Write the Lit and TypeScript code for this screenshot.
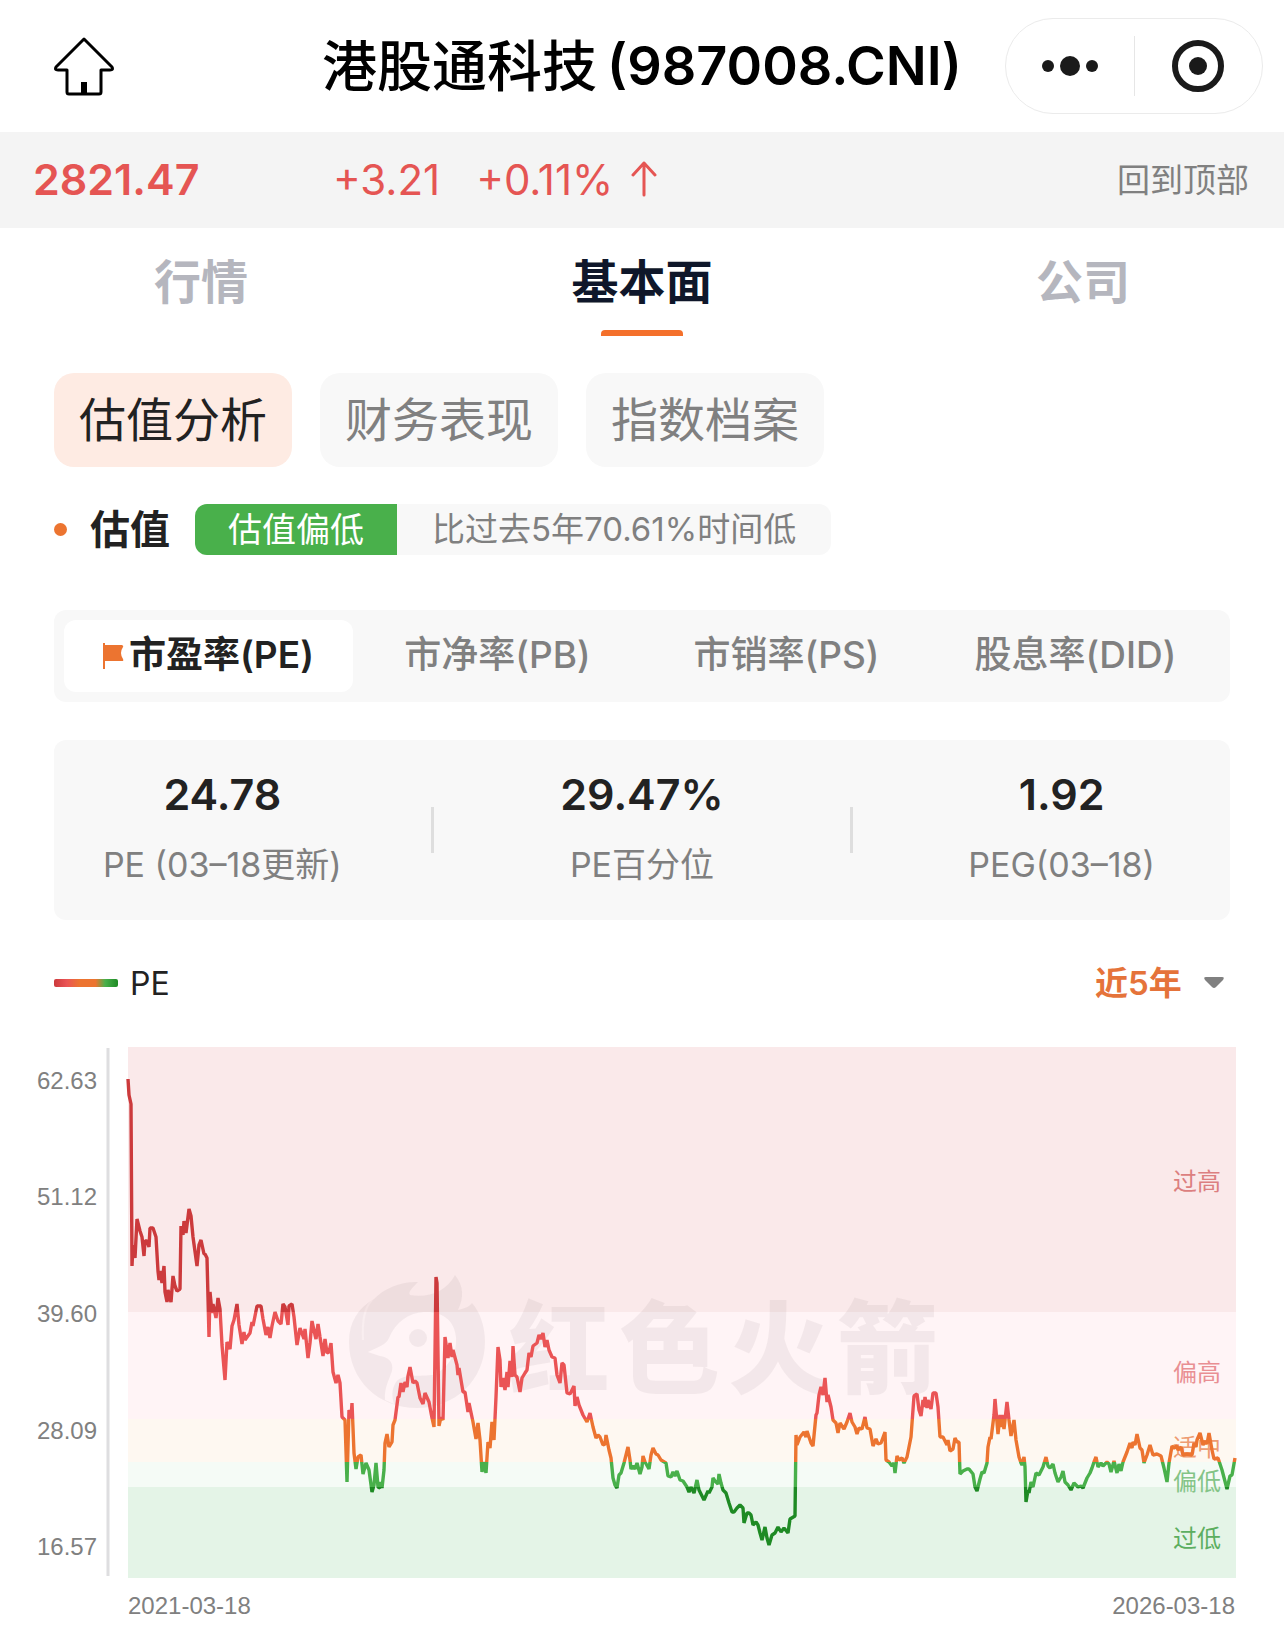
import { LitElement, html, css, svg } from "lit";
import { customElement, state } from "lit/decorators.js";

/** PE series, as x,y pairs in chart units. */
const SERIES = `128,79 129,95 131,104 132,266 133,245 135,258 137,219 140,231 142,237 144,256 145,241 147,241 149,247 150,228 153,228 156,237 158,271 159,280 160,271 162,283 164,266 165,292 167,302 168,290 171,302 173,276 175,286 177,291 180,289 181,226 183,235 184,221 186,233 189,209 191,216 193,237 197,266 199,245 201,240 204,254 205,254 207,258 209,337 210,292 212,313 213,304 216,318 218,298 220,309 222,345 225,380 227,342 230,349 232,326 234,320 237,304 239,325 242,344 244,332 245,340 250,333 252,322 253,326 257,306 261,306 263,319 266,335 268,327 270,338 272,326 275,312 278,321 281,324 283,304 285,307 288,325 289,306 292,304 294,317 297,345 300,328 304,339 305,329 308,358 310,343 312,321 315,335 316,339 318,324 320,337 323,356 325,339 327,353 329,352 331,343 333,372 336,383 338,375 340,383 342,417 345,420 347,482 349,410 351,418 352,403 354,453 356,469 358,457 361,455 363,474 366,463 369,470 372,492 374,485 376,463 378,487 380,488 381,482 382,488 384,470 385,443 387,434 389,447 392,442 393,425 395,420 398,397 399,397 401,383 403,392 405,382 407,387 408,376 410,367 413,383 415,381 417,383 420,398 423,404 425,393 429,402 432,418 434,427 436,277 437,283 439,426 441,417 443,420 445,337 448,358 450,343 452,357 453,350 457,365 458,375 459,368 463,392 465,392 468,412 469,403 473,422 476,439 478,423 480,440 482,472 484,462 486,473 488,442 490,448 492,422 494,440 496,397 498,347 500,360 501,387 503,378 505,390 507,372 508,387 510,361 512,377 513,346 515,375 517,377 520,392 522,378 525,373 527,370 529,353 531,357 533,346 537,343 539,335 541,339 543,333 545,347 547,340 549,350 552,357 555,358 557,375 560,383 562,363 564,365 567,393 570,394 572,390 574,386 575,406 577,397 579,405 583,415 587,422 590,413 593,427 596,438 598,435 600,437 603,445 605,444 606,435 609,450 611,458 613,478 615,485 617,488 619,475 621,473 624,463 628,447 630,460 631,469 633,466 635,469 637,463 640,474 642,467 643,456 645,462 649,469 651,455 653,448 656,454 658,455 661,460 666,463 668,476 671,477 673,472 675,476 677,471 680,480 683,481 687,487 689,492 691,487 694,493 697,480 699,490 704,500 708,491 709,493 712,487 713,478 715,481 718,484 719,474 721,483 723,490 726,493 729,503 732,512 734,512 737,508 740,505 743,508 744,523 747,513 749,513 751,515 753,525 756,522 758,525 760,533 762,540 765,527 767,538 769,545 772,535 775,533 778,527 781,532 784,528 788,533 790,519 795,516 796,435 797,445 800,437 804,432 806,437 807,431 811,443 813,446 816,415 817,413 819,395 821,387 823,395 825,378 827,402 828,395 831,407 833,420 836,423 838,433 840,423 844,429 847,422 850,413 852,422 855,427 857,434 859,428 862,429 865,417 867,428 870,429 873,446 876,439 878,444 881,443 885,432 886,460 889,462 892,466 894,463 895,473 897,456 899,460 902,458 904,463 907,457 911,437 914,396 917,394 919,410 921,416 923,400 924,407 925,397 927,408 928,400 931,409 933,393 936,393 938,407 940,437 943,437 947,445 948,440 950,451 953,449 955,438 957,442 959,442 960,474 963,471 967,469 969,469 973,474 975,487 977,491 980,479 982,472 984,473 987,463 988,447 990,437 991,439 994,415 995,399 998,434 1000,415 1001,427 1002,415 1004,429 1007,402 1009,420 1011,436 1014,420 1016,440 1019,457 1021,463 1022,465 1024,457 1025,467 1026,502 1028,490 1029,493 1031,482 1033,487 1036,473 1039,475 1043,467 1046,457 1048,466 1050,468 1053,464 1055,473 1058,482 1061,477 1063,471 1065,482 1068,485 1071,490 1074,483 1078,487 1081,486 1083,488 1087,478 1090,473 1092,468 1094,462 1096,457 1098,467 1101,463 1103,466 1107,462 1109,464 1111,472 1114,461 1117,473 1119,464 1121,471 1123,462 1127,452 1130,443 1132,448 1133,442 1135,445 1137,434 1140,448 1142,450 1144,463 1147,455 1150,445 1153,455 1157,454 1161,456 1164,468 1167,482 1169,463 1172,446 1174,448 1177,446 1178,450 1181,447 1183,455 1187,454 1192,455 1194,443 1196,447 1197,440 1200,433 1203,445 1205,441 1207,444 1209,433 1212,450 1214,459 1218,458 1222,470 1227,489 1230,476 1232,475 1235,458`;

/** Valuation bands: vertical extent, fill, line colour and caption. */
const BANDS = [
  { y: 47, h: 265, fill: "#fae9ea", line: "#cc3a3c", label: "过高", ty: 190, ink: "#dc7f80" },
  { y: 312, h: 107, fill: "#fff4f6", line: "#ea5455", label: "偏高", ty: 381, ink: "#e98f93" },
  { y: 419, h: 43, fill: "#fef8f1", line: "#ec7430", label: "适中", ty: 456, ink: "#ee9c72" },
  { y: 462, h: 25, fill: "#f5fbf6", line: "#49b04b", label: "偏低", ty: 490, ink: "#84c487" },
  { y: 487, h: 91, fill: "#e4f4e7", line: "#1e8a24", label: "过低", ty: 547, ink: "#5cae60" },
];

const Y_TICKS = [
  { v: "62.63", y: 89 },
  { v: "51.12", y: 205 },
  { v: "39.60", y: 322 },
  { v: "28.09", y: 439 },
  { v: "16.57", y: 555 },
];

@customElement("pe-chart")
class PeChart extends LitElement {
  static styles = css`
    :host {
      display: block;
    }
    svg {
      display: block;
      width: 100%;
      height: auto;
    }
    .tick {
      font: 24px "Liberation Sans", Arial, sans-serif;
      fill: #808080;
    }
    .caption {
      font: 24px "Noto Sans CJK SC", sans-serif;
    }
    .mark {
      fill: #30181c;
      opacity: 0.05;
    }
    .mark-text {
      font: 900 101px "Noto Sans CJK SC", sans-serif;
    }
    .hole {
      fill: #000;
    }
  `;

  render() {
    const top = 47;
    const span = 531;
    return html`<svg viewBox="0 40 1284 586" role="img" aria-label="PE">
      <defs>
        <linearGradient id="line" gradientUnits="userSpaceOnUse" x1="0" y1=${top} x2="0" y2=${top + span}>
          ${BANDS.map(
            (b) => svg`<stop offset=${(b.y - top) / span} stop-color=${b.line} /><stop offset=${(b.y + b.h - top) / span} stop-color=${b.line} />`
          )}
        </linearGradient>
        <mask id="bird">
          <rect x="340" y="260" width="160" height="160" fill="#fff" />
          <path class="hole" d="M368 352 C378 347 386 345 389 338 C396 322 408 313 424 312 C444 311 455 322 456 338 C457 356 448 366 436 374 C424 378 404 372 396 382 C391 390 392 397 394 404 L385 400 C384 388 389 380 392 371 C394 362 388 357 380 356 Z" />
          <path d="M372 300 C364 308 362 322 363 340" fill="none" stroke="#888" stroke-width="2" />
        </mask>
      </defs>
      ${BANDS.map((b) => svg`<rect x="128" y=${b.y} width="1108" height=${b.h} fill=${b.fill} />`)}
      <g class="mark">
        <g mask="url(#bird)">
          <path d="M349 342 C349 322 358 308 374 299 C384 288 402 281 418 282 C412 288 408 292 410 295 C428 298 446 292 455 275 C464 286 464 298 458 310 C466 308 470 306 472 303 C480 312 485 326 485 342 C485 380 455 408 417 408 C378 408 349 380 349 342 Z" />
        </g>
        <circle cx="418" cy="338" r="9" />
        <text class="mark-text" y="386">
          <tspan x="509">红</tspan><tspan x="619">色</tspan><tspan x="728">火</tspan><tspan x="837">箭</tspan>
        </text>
      </g>
      ${BANDS.map((b) => svg`<text class="caption" x="1173" y=${b.ty} fill=${b.ink}>${b.label}</text>`)}
      <polyline points=${SERIES} fill="none" stroke="url(#line)" stroke-width="3.4" stroke-linejoin="bevel" />
      <line x1="108" y1="48" x2="108" y2="576" stroke="#dedee0" stroke-width="3" />
      ${Y_TICKS.map((t) => svg`<text class="tick" x="97" y=${t.y} text-anchor="end">${t.v}</text>`)}
      <text class="tick" x="128" y="614">2021-03-18</text>
      <text class="tick" x="1235" y="614" text-anchor="end">2026-03-18</text>
    </svg>`;
  }
}

@customElement("app-root")
class AppRoot extends LitElement {
  @state() private tab = 1;
  @state() private chip = 0;
  @state() private metric = 0;

  static styles = css`
    :host {
      display: block;
      background: #fff;
      color: #222;
      font-family: Inter, "Noto Sans CJK SC", sans-serif;
    }
    * {
      box-sizing: border-box;
    }
    button,
    select {
      font: inherit;
      color: inherit;
      background: none;
      border: 0;
      padding: 0;
      margin: 0;
      cursor: pointer;
    }
    svg {
      display: block;
    }
    .head {
      display: grid;
      grid-template-columns: 1fr auto 1fr;
      align-items: center;
      height: 132px;
      padding: 0 21px;
    }
    .home {
      justify-self: start;
      margin-left: 32px;
    }
    .title {
      display: flex;
      gap: 10px;
      margin: 0;
      font-size: 54px;
      font-weight: 600;
      line-height: 64px;
      color: #000;
      white-space: nowrap;
    }
    .name {
      font-size: 55px;
      font-weight: 500;
    }
    .capsule {
      justify-self: end;
      display: flex;
      align-items: center;
      height: 96px;
      width: 258px;
      border: 1px solid #ebebeb;
      border-radius: 48px;
    }
    .capsule button {
      flex: 1;
      display: grid;
      place-items: center;
      height: 60px;
    }
    .capsule button + button {
      border-left: 1px solid #e6e6e6;
    }
    .quote {
      display: flex;
      align-items: center;
      height: 96px;
      padding: 0 35px 2px 33px;
      background: #f4f4f4;
      color: #e55553;
      font-size: 42px;
    }
    .price {
      width: 300px;
      font-size: 43px;
      font-weight: 600;
    }
    .pct {
      margin-left: 36px;
    }
    .up {
      margin-left: 18px;
    }
    .top {
      margin-left: auto;
      padding-bottom: 2px;
      font-size: 33px;
      color: #808080;
      text-decoration: none;
    }
    .tabs {
      display: flex;
      justify-content: space-between;
      padding: 20px 154px 0;
      font-size: 47px;
      line-height: 68px;
      font-weight: 700;
      color: #b5b6be;
    }
    .tab {
      display: flex;
      flex-direction: column;
      align-items: center;
      gap: 14px;
    }
    .tab::after {
      content: "";
      width: 82px;
      height: 6px;
      border-radius: 4px 4px 0 0;
    }
    .tab.on {
      color: #0f172a;
    }
    .tab.on::after {
      background: #f4702b;
    }
    .body {
      padding: 37px 54px 0;
    }
    .chips {
      display: flex;
      gap: 28px;
      font-size: 47px;
    }
    .chip {
      height: 94px;
      padding: 0 25px 8px;
      border-radius: 20px;
      background: #f8f8f8;
      color: #808080;
    }
    .chip.on {
      background: #feebe3;
      color: #222;
    }
    .value {
      display: flex;
      align-items: center;
      margin-top: 37px;
      height: 51px;
      font-size: 34px;
      line-height: 51px;
    }
    .value h2 {
      margin: 0 25px 0 23px;
      font-size: 40px;
      font-weight: 700;
    }
    .dot {
      width: 13px;
      height: 13px;
      border-radius: 50%;
      background: #ec7430;
    }
    .badge {
      padding: 0 33px;
      border-radius: 12px 0 0 12px;
      background: #49b04b;
      color: #fff;
    }
    .note {
      padding: 0 35px;
      border-radius: 0 12px 12px 0;
      background: #f8f8f8;
      font-size: 33px;
      color: #808080;
    }
    .metrics {
      display: grid;
      grid-template-columns: repeat(4, 1fr);
      margin-top: 55px;
      padding: 10px;
      border-radius: 12px;
      background: #f8f8f8;
      font-size: 37px;
      font-weight: 500;
      color: #808080;
    }
    .metric {
      display: flex;
      align-items: center;
      justify-content: center;
      gap: 5px;
      height: 72px;
      border-radius: 12px;
      white-space: nowrap;
    }
    .metric span {
      padding-bottom: 8px;
    }
    .metric.on {
      background: #fff;
      color: #222;
      font-weight: 600;
    }
    .stats {
      display: grid;
      grid-template-columns: 1fr 3px 1fr 3px 1fr;
      column-gap: 40px;
      align-items: center;
      margin-top: 38px;
      height: 180px;
      border-radius: 12px;
      background: #f8f8f8;
      text-align: center;
      white-space: nowrap;
    }
    .stat {
      display: flex;
      flex-direction: column;
      gap: 22px;
      padding-bottom: 2px;
    }
    .num {
      font-size: 43px;
      line-height: 50px;
      font-weight: 600;
    }
    .cap {
      font-size: 34px;
      line-height: 48px;
      color: #808080;
    }
    .rule {
      height: 46px;
      background: #dedede;
    }
    .legend {
      display: flex;
      align-items: center;
      margin-top: 38px;
      height: 50px;
      font-size: 32px;
    }
    .swatch {
      width: 64px;
      height: 8px;
      margin-right: 12px;
      border-radius: 2px;
      background: linear-gradient(90deg, #cc3a3c, #ea5455 20%, #ec7430 40%, #ec7430 65%, #49b04b 80%, #1e8a24);
    }
    .range {
      display: flex;
      align-items: center;
      gap: 22px;
      margin-left: auto;
      padding-right: 6px;
      color: #e5733a;
      font-size: 33px;
      font-weight: 600;
    }
    .range select {
      appearance: none;
    }
    .chart {
      margin-top: 32px;
    }
  `;

  render() {
    const tabs = ["行情", "基本面", "公司"];
    const chips = ["估值分析", "财务表现", "指数档案"];
    const metrics = ["市盈率(PE)", "市净率(PB)", "市销率(PS)", "股息率(DID)"];
    return html`
      <header class="head">
        <button class="home" aria-label="首页">
          <svg width="62" height="60" viewBox="0 0 62 60" fill="none" stroke="#000" stroke-width="3" stroke-linejoin="round">
            <path d="M31 3 L3 31 Q1 34 5 34 H14 V56 Q14 58 16 58 H46 Q48 58 48 56 V34 H57 Q61 34 59 31 Z" />
            <path d="M28 46 H34 V58 H28 Z" fill="#000" stroke="none" />
          </svg>
        </button>
        <h1 class="title"><span class="name">港股通科技</span> <span>(987008.CNI)</span></h1>
        <div class="capsule">
          <button aria-label="更多">
            <svg width="56" height="20" viewBox="0 0 56 20" fill="#1a1a1a">
              <circle cx="6" cy="10" r="6" />
              <circle cx="28" cy="10" r="10" />
              <circle cx="50" cy="10" r="6" />
            </svg>
          </button>
          <button aria-label="关闭">
            <svg width="52" height="52" viewBox="0 0 52 52">
              <circle cx="26" cy="26" r="23" fill="none" stroke="#1a1a1a" stroke-width="6" />
              <circle cx="26" cy="26" r="9" fill="#1a1a1a" />
            </svg>
          </button>
        </div>
      </header>
      <div class="quote" id="top">
        <span class="price">2821.47</span>
        <span>+3.21</span>
        <span class="pct">+0.11%</span>
        <svg class="up" width="26" height="36" viewBox="0 0 26 36" fill="none" stroke="#e55553" stroke-width="3" stroke-linecap="round" stroke-linejoin="round">
          <path d="M13 34 V2 M2 14 L13 2 L24 14" />
        </svg>
        <a class="top" href="#top">回到顶部</a>
      </div>
      <nav class="tabs">
        ${tabs.map((t, i) => html`<button class="tab ${i === this.tab ? "on" : ""}" @click=${() => (this.tab = i)}>${t}</button>`)}
      </nav>
      <main>
        <div class="body">
          <div class="chips">
            ${chips.map((t, i) => html`<button class="chip ${i === this.chip ? "on" : ""}" @click=${() => (this.chip = i)}>${t}</button>`)}
          </div>
          <div class="value">
            <span class="dot"></span>
            <h2>估值</h2>
            <span class="badge">估值偏低</span>
            <span class="note">比过去5年70.61%时间低</span>
          </div>
          <div class="metrics">
            ${metrics.map(
              (t, i) => html`<button class="metric ${i === this.metric ? "on" : ""}" @click=${() => (this.metric = i)}>
                ${i === 0
                  ? html`<svg width="21" height="26" viewBox="0 0 21 26" fill="#ec7430">
                      <path d="M0 0 H2 V2 H19 Q21 3 20 4 Q16 10 20 16 Q21 18 19 18 H2 V26 H0 Z" />
                    </svg>`
                  : ""}<span>${t}</span>
              </button>`
            )}
          </div>
          <div class="stats">
            <div class="stat"><span class="num">24.78</span><span class="cap">PE (03–18更新)</span></div>
            <span class="rule"></span>
            <div class="stat"><span class="num">29.47%</span><span class="cap">PE百分位</span></div>
            <span class="rule"></span>
            <div class="stat"><span class="num">1.92</span><span class="cap">PEG(03–18)</span></div>
          </div>
          <div class="legend">
            <span class="swatch"></span>
            <span>PE</span>
            <label class="range">
              <select aria-label="近5年">
                <option>近5年</option>
              </select>
              <svg width="20" height="12" viewBox="0 0 20 12" fill="#808080">
                <path d="M2 0 H18 Q21 0 19 3 L12 10 Q10 12 8 10 L1 3 Q-1 0 2 0 Z" />
              </svg>
            </label>
          </div>
        </div>
        <pe-chart class="chart"></pe-chart>
      </main>
    `;
  }
}
